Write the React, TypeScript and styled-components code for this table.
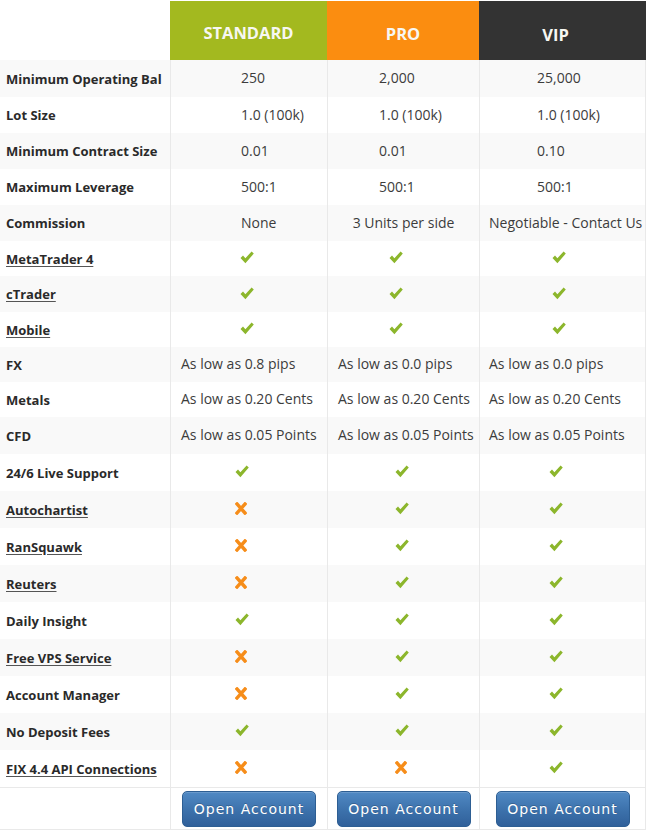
import React from "react";
import styled, { createGlobalStyle } from "styled-components";

const Global = createGlobalStyle`
  html, body { margin: 0; padding: 0; background: #ffffff; }
  body { font-family: "Open Sans", sans-serif; }
`;

const COLS = "170px 157px 152px 167px";

const Table = styled.div`
  width: 646px;
  padding-top: 1px;
  display: flex;
  flex-direction: column;
`;

const HeaderRow = styled.div`
  display: grid;
  grid-template-columns: ${COLS};
  height: 59px;
`;

const Blank = styled.div``;

const PlanHead = styled.div<{ $bg: string; $dy: number; $dx: number }>`
  background: ${(p) => p.$bg};
  display: flex;
  align-items: center;
  justify-content: center;
  padding-top: ${(p) => 4 + p.$dy * 2}px;
  padding-right: ${(p) => p.$dx * 2}px;
  box-sizing: border-box;
  color: #f7f7f2;
  font-family: "Open Sans", sans-serif;
  font-weight: 700;
  font-size: 16.5px;
  letter-spacing: 0;
`;

const Row = styled.div<{ $h: number; $alt: boolean }>`
  display: grid;
  grid-template-columns: ${COLS};
  height: ${(p) => p.$h}px;
  background: ${(p) => (p.$alt ? "#f9f9f9" : "#ffffff")};
`;

const Label = styled.div<{ $link: boolean }>`
  display: flex;
  align-items: center;
  padding-left: 6px;
  font-family: "Open Sans", sans-serif;
  font-weight: 700;
  font-size: 13px;
  color: #2a2a2a;
  white-space: nowrap;
  text-decoration: ${(p) => (p.$link ? "underline" : "none")};
  text-decoration-color: #555;
  text-underline-offset: 2px;
`;

const Cell = styled.div<{ $pad: number; $center: boolean; $last: boolean }>`
  display: flex;
  align-items: center;
  justify-content: ${(p) => (p.$center ? "center" : "flex-start")};
  padding-left: ${(p) => (p.$center ? 0 : p.$pad)}px;
  padding-bottom: 2px;
  border-left: 1px solid #e9e9e9;
  border-right: ${(p) => (p.$last ? "1px solid #e9e9e9" : "none")};
  box-sizing: border-box;
  font-family: "Open Sans", sans-serif;
  font-size: 14px;
  color: #3c3c3c;
  white-space: nowrap;
`;

const ButtonRow = styled.div`
  display: grid;
  grid-template-columns: ${COLS};
  height: 41px;
  border-top: 1px solid #e9e9e9;
  border-bottom: 1px solid #e9e9e9;
`;

const ButtonCell = styled.div<{ $last: boolean }>`
  display: flex;
  align-items: center;
  justify-content: center;
  border-left: 1px solid #e9e9e9;
  border-right: ${(p) => (p.$last ? "1px solid #e9e9e9" : "none")};
`;

const OpenButton = styled.button`
  width: 134px;
  height: 36px;
  border-radius: 5px;
  border: 1px solid #2d5e93;
  background: linear-gradient(#5089c4, #3c71ab 55%, #30609a);
  color: #ffffff;
  font-family: "DejaVu Sans", Verdana, sans-serif;
  font-size: 14px;
  letter-spacing: 1px;
  padding: 0;
  cursor: pointer;
  box-shadow: inset 0 1px 0 rgba(255, 255, 255, 0.15);
  text-shadow: 0 -1px 0 rgba(0, 0, 0, 0.2);
`;

const Check = () => (
  <svg width="14" height="13" viewBox="0 0 14 13">
    <path d="M0.5 7 L3 4.6 L5.4 7.2 L11.6 0.5 L13.8 2.6 L5.4 12.2 Z" fill="#8cb62c" />
  </svg>
);

const Cross = () => (
  <svg width="12" height="13" viewBox="0 0 12 13">
    <path d="M2 2 L10 11 M10 2 L2 11" stroke="#f68d1a" strokeWidth="3.4" strokeLinecap="square" />
  </svg>
);

type Kind = "simple" | "wide" | "comm" | "markA" | "markB";

const PADS: Record<Kind, number[]> = {
  simple: [70, 51, 57],
  wide: [10, 10, 9],
  comm: [70, 0, 9],
  markA: [69, 61, 72],
  markB: [64, 67, 69],
};

type RowData = {
  label: string;
  link?: boolean;
  kind: Kind;
  h: number;
  values: (string | boolean)[];
};

const rows: RowData[] = [
  { label: "Minimum Operating Bal", kind: "simple", h: 37, values: ["250", "2,000", "25,000"] },
  { label: "Lot Size", kind: "simple", h: 36, values: ["1.0 (100k)", "1.0 (100k)", "1.0 (100k)"] },
  { label: "Minimum Contract Size", kind: "simple", h: 36, values: ["0.01", "0.01", "0.10"] },
  { label: "Maximum Leverage", kind: "simple", h: 36, values: ["500:1", "500:1", "500:1"] },
  { label: "Commission", kind: "comm", h: 36, values: ["None", "3 Units per side", "Negotiable - Contact Us"] },
  { label: "MetaTrader 4", link: true, kind: "markA", h: 35, values: [true, true, true] },
  { label: "cTrader", link: true, kind: "markA", h: 36, values: [true, true, true] },
  { label: "Mobile", link: true, kind: "markA", h: 35, values: [true, true, true] },
  { label: "FX", kind: "wide", h: 35, values: ["As low as 0.8 pips", "As low as 0.0 pips", "As low as 0.0 pips"] },
  { label: "Metals", kind: "wide", h: 35, values: ["As low as 0.20 Cents", "As low as 0.20 Cents", "As low as 0.20 Cents"] },
  { label: "CFD", kind: "wide", h: 37, values: ["As low as 0.05 Points", "As low as 0.05 Points", "As low as 0.05 Points"] },
  { label: "24/6 Live Support", kind: "markB", h: 37, values: [true, true, true] },
  { label: "Autochartist", link: true, kind: "markB", h: 37, values: [false, true, true] },
  { label: "RanSquawk", link: true, kind: "markB", h: 37, values: [false, true, true] },
  { label: "Reuters", link: true, kind: "markB", h: 37, values: [false, true, true] },
  { label: "Daily Insight", kind: "markB", h: 37, values: [true, true, true] },
  { label: "Free VPS Service", link: true, kind: "markB", h: 37, values: [false, true, true] },
  { label: "Account Manager", kind: "markB", h: 37, values: [false, true, true] },
  { label: "No Deposit Fees", kind: "markB", h: 37, values: [true, true, true] },
  { label: "FIX 4.4 API Connections", link: true, kind: "markB", h: 37, values: [false, false, true] },
];

const plans = [
  { name: "STANDARD", bg: "#a3b91f", dy: 0, dx: 0 },
  { name: "PRO", bg: "#fb8d10", dy: 1, dx: 0 },
  { name: "VIP", bg: "#333333", dy: 2, dx: 7 },
];

export default function App() {
  return (
    <>
      <Global />
      <Table>
        <HeaderRow>
          <Blank />
          {plans.map((p) => (
            <PlanHead key={p.name} $bg={p.bg} $dy={p.dy} $dx={p.dx}>
              {p.name}
            </PlanHead>
          ))}
        </HeaderRow>
        {rows.map((r, i) => (
          <Row key={r.label} $h={r.h} $alt={i % 2 === 0}>
            <Label $link={!!r.link}>{r.label}</Label>
            {r.values.map((v, j) => (
              <Cell
                key={j}
                $pad={PADS[r.kind][j]}
                $center={r.kind === "comm" && j === 1}
                $last={j === 2}
              >
                {typeof v === "boolean" ? v ? <Check /> : <Cross /> : v}
              </Cell>
            ))}
          </Row>
        ))}
        <ButtonRow>
          <Blank />
          {[0, 1, 2].map((j) => (
            <ButtonCell key={j} $last={j === 2}>
              <OpenButton>Open Account</OpenButton>
            </ButtonCell>
          ))}
        </ButtonRow>
      </Table>
    </>
  );
}
